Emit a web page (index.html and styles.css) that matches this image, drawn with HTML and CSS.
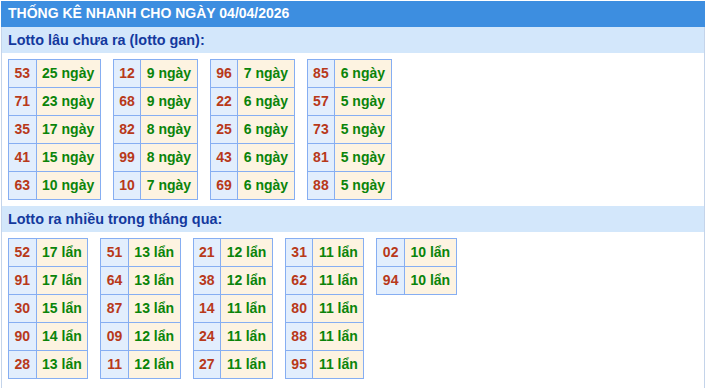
FILE: index.html
```html
<!DOCTYPE html>
<html lang="vi">
<head>
<meta charset="utf-8">
<title>Thống kê nhanh</title>
<link rel="stylesheet" href="styles.css">
</head>
<body>
<div class="panel">
  <div class="title">THỐNG KÊ NHANH CHO NGÀY 04/04/2026</div>
  <div class="body">
    <div class="sub">Lotto lâu chưa ra (lotto gan):</div>
    <div class="tables">
      <table class="stat"><tbody>
        <tr><td class="num">53</td><td class="val">25 ngày</td></tr>
        <tr><td class="num">71</td><td class="val">23 ngày</td></tr>
        <tr><td class="num">35</td><td class="val">17 ngày</td></tr>
        <tr><td class="num">41</td><td class="val">15 ngày</td></tr>
        <tr><td class="num">63</td><td class="val">10 ngày</td></tr>
      </tbody></table>
      <table class="stat"><tbody>
        <tr><td class="num">12</td><td class="val">9 ngày</td></tr>
        <tr><td class="num">68</td><td class="val">9 ngày</td></tr>
        <tr><td class="num">82</td><td class="val">8 ngày</td></tr>
        <tr><td class="num">99</td><td class="val">8 ngày</td></tr>
        <tr><td class="num">10</td><td class="val">7 ngày</td></tr>
      </tbody></table>
      <table class="stat"><tbody>
        <tr><td class="num">96</td><td class="val">7 ngày</td></tr>
        <tr><td class="num">22</td><td class="val">6 ngày</td></tr>
        <tr><td class="num">25</td><td class="val">6 ngày</td></tr>
        <tr><td class="num">43</td><td class="val">6 ngày</td></tr>
        <tr><td class="num">69</td><td class="val">6 ngày</td></tr>
      </tbody></table>
      <table class="stat"><tbody>
        <tr><td class="num">85</td><td class="val">6 ngày</td></tr>
        <tr><td class="num">57</td><td class="val">5 ngày</td></tr>
        <tr><td class="num">73</td><td class="val">5 ngày</td></tr>
        <tr><td class="num">81</td><td class="val">5 ngày</td></tr>
        <tr><td class="num">88</td><td class="val">5 ngày</td></tr>
      </tbody></table>
    </div>
    <div class="sub">Lotto ra nhiều trong tháng qua:</div>
    <div class="tables last">
      <table class="stat"><tbody>
        <tr><td class="num">52</td><td class="val">17 lẩn</td></tr>
        <tr><td class="num">91</td><td class="val">17 lẩn</td></tr>
        <tr><td class="num">30</td><td class="val">15 lẩn</td></tr>
        <tr><td class="num">90</td><td class="val">14 lẩn</td></tr>
        <tr><td class="num">28</td><td class="val">13 lẩn</td></tr>
      </tbody></table>
      <table class="stat"><tbody>
        <tr><td class="num">51</td><td class="val">13 lẩn</td></tr>
        <tr><td class="num">64</td><td class="val">13 lẩn</td></tr>
        <tr><td class="num">87</td><td class="val">13 lẩn</td></tr>
        <tr><td class="num">09</td><td class="val">12 lẩn</td></tr>
        <tr><td class="num">11</td><td class="val">12 lẩn</td></tr>
      </tbody></table>
      <table class="stat"><tbody>
        <tr><td class="num">21</td><td class="val">12 lẩn</td></tr>
        <tr><td class="num">38</td><td class="val">12 lẩn</td></tr>
        <tr><td class="num">14</td><td class="val">11 lẩn</td></tr>
        <tr><td class="num">24</td><td class="val">11 lẩn</td></tr>
        <tr><td class="num">27</td><td class="val">11 lẩn</td></tr>
      </tbody></table>
      <table class="stat"><tbody>
        <tr><td class="num">31</td><td class="val">11 lẩn</td></tr>
        <tr><td class="num">62</td><td class="val">11 lẩn</td></tr>
        <tr><td class="num">80</td><td class="val">11 lẩn</td></tr>
        <tr><td class="num">88</td><td class="val">11 lẩn</td></tr>
        <tr><td class="num">95</td><td class="val">11 lẩn</td></tr>
      </tbody></table>
      <table class="stat"><tbody>
        <tr><td class="num">02</td><td class="val">10 lẩn</td></tr>
        <tr><td class="num">94</td><td class="val">10 lẩn</td></tr>
      </tbody></table>
    </div>
  </div>
</div>
</body>
</html>
```
FILE: styles.css
```css
html, body {
  margin: 0;
  padding: 0;
  background: #ffffff;
}
body {
  font-family: "Liberation Sans", Arial, sans-serif;
  font-size: 14px;
}
.panel {
  width: 704px;
  margin: 1px 0 0 1px;
}
.title {
  height: 26px;
  line-height: 25px;
  padding-left: 7px;
  background: #3d8ee0;
  color: #ffffff;
  font-weight: bold;
  font-size: 14px;
}
.body {
  border-left: 1px solid #c4d4ea;
  border-right: 1px solid #c4d4ea;
  border-bottom: 1px solid #c4d4ea;
}
.sub {
  height: 26px;
  line-height: 26px;
  padding-left: 6px;
  background: #d3e7fb;
  color: #13399e;
  font-weight: bold;
  font-size: 14.4px;
}
.tables {
  display: flex;
  align-items: flex-start;
  gap: 12px;
  padding: 6px;
}
.tables.last {
  padding-bottom: 12px;
}
.stat {
  border-collapse: collapse;
  font-weight: bold;
  font-size: 14px;
}
.stat td {
  border: 1px solid #86aef2;
  line-height: 27px;
  padding: 0 5.5px;
  text-align: center;
  white-space: nowrap;
}
.stat .num {
  background: #e2eefd;
  color: #b8391a;
}
.stat .val {
  background: #fdf3e1;
  color: #0a840a;
}
```
